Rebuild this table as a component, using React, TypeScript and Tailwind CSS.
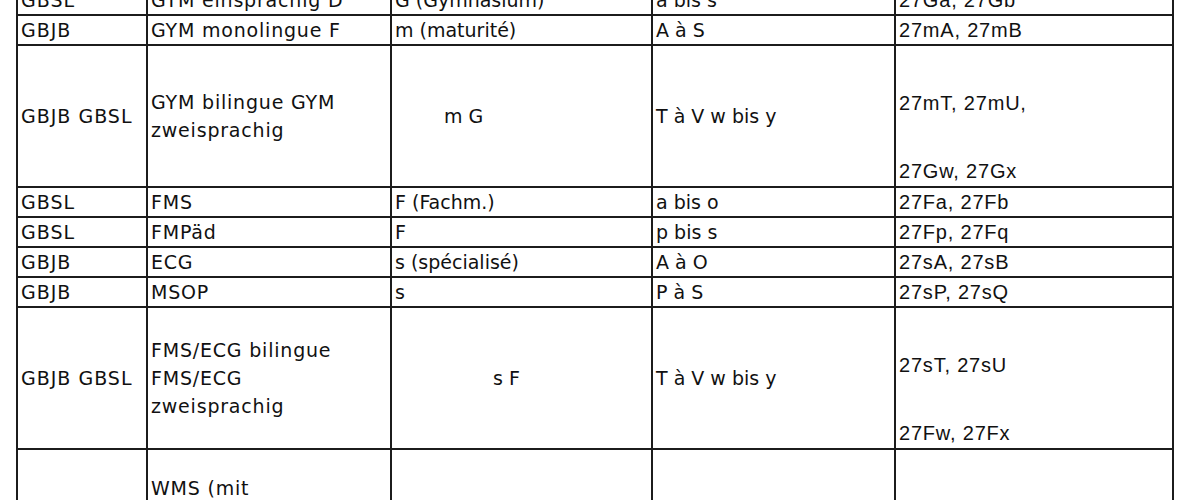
type Row = {
  school: string[];
  course: string[];
  code: string;
  codeIndent?: string;
  classes: string;
  names: string[];
  tall?: boolean;
};

const rows: Row[] = [
  { school: ["GBSL"], course: ["GYM einsprachig D"], code: "G (Gymnasium)", classes: "a bis s", names: ["27Ga, 27Gb"] },
  { school: ["GBJB"], course: ["GYM monolingue F"], code: "m (maturité)", classes: "A à S", names: ["27mA, 27mB"] },
  {
    school: ["GBJB GBSL"],
    course: ["GYM bilingue GYM", "zweisprachig"],
    code: "m G",
    codeIndent: "pl-[52px]",
    classes: "T à V w bis y",
    names: ["27mT, 27mU,", "27Gw, 27Gx"],
    tall: true,
  },
  { school: ["GBSL"], course: ["FMS"], code: "F (Fachm.)", classes: "a bis o", names: ["27Fa, 27Fb"] },
  { school: ["GBSL"], course: ["FMPäd"], code: "F", classes: "p bis s", names: ["27Fp, 27Fq"] },
  { school: ["GBJB"], course: ["ECG"], code: "s (spécialisé)", classes: "A à O", names: ["27sA, 27sB"] },
  { school: ["GBJB"], course: ["MSOP"], code: "s", classes: "P à S", names: ["27sP, 27sQ"] },
  {
    school: ["GBJB GBSL"],
    course: ["FMS/ECG bilingue", "FMS/ECG", "zweisprachig"],
    code: "s F",
    codeIndent: "pl-[101px]",
    classes: "T à V w bis y",
    names: ["27sT, 27sU", "27Fw, 27Fx"],
    tall: true,
  },
];

const cell = "border-2 border-[#1c1c1c] px-[3px] align-middle whitespace-nowrap overflow-hidden";

export default function App() {
  return (
    <div className="w-[1200px] h-[500px] overflow-hidden bg-white text-[#111]">
      <table
        className="table-fixed border-collapse ml-[16px] -mt-[16px] w-[1156px] text-[19px] leading-[28px]"
        style={{ fontFamily: "'DejaVu Sans', 'Noto Sans', sans-serif" }}
      >
        <colgroup>
          <col className="w-[130px]" />
          <col className="w-[244px]" />
          <col className="w-[261px]" />
          <col className="w-[243px]" />
          <col className="w-[278px]" />
        </colgroup>
        <tbody>
          {rows.map((r, i) => (
            <tr key={i} className={r.tall ? "h-[142px]" : "h-[30px]"}>
              <td className={`${cell} tracking-[1px]`}>{r.school.join(" ")}</td>
              <td className={`${cell} tracking-[0.8px]`}>
                {r.course.map((l, j) => (
                  <div key={j}>{l}</div>
                ))}
              </td>
              <td className={`${cell} ${r.codeIndent ?? ""}`}>{r.code}</td>
              <td className={cell}>{r.classes}</td>
              <td className={`${cell} font-['Liberation_Sans',Arial,sans-serif] text-[20px] tracking-[0.8px]`}>
                {r.tall ? (
                  <div className="h-[138px] flex flex-col justify-between pt-[42px]">
                    <div>{r.names[0]}</div>
                    <div>{r.names[1]}</div>
                  </div>
                ) : (
                  r.names[0]
                )}
              </td>
            </tr>
          ))}
          <tr className="h-[142px]">
            <td className={cell}></td>
            <td className={`${cell} tracking-[0.8px] align-top pt-[24px]`}>
              <div>WMS (mit</div>
              <div>Berufsmaturität)</div>
            </td>
            <td className={cell}></td>
            <td className={cell}></td>
            <td className={cell}></td>
          </tr>
        </tbody>
      </table>
    </div>
  );
}
